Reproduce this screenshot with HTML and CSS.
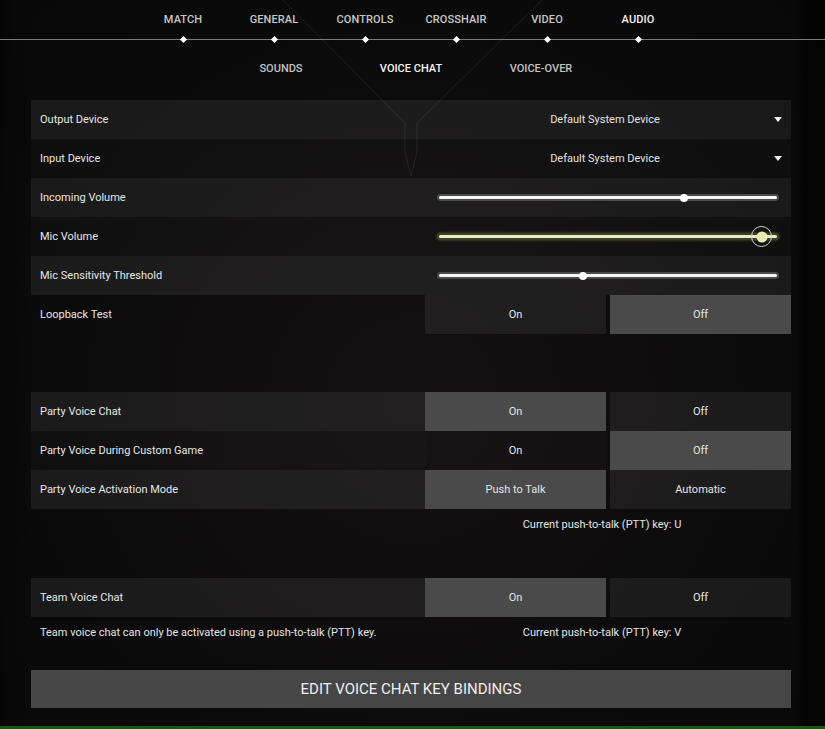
FILE: index.html
```html
<!DOCTYPE html>
<html>
<head>
<meta charset="utf-8">
<link rel="stylesheet" href="styles.css">
</head>
<body>
<div class="screen">
  <svg class="decor" width="825" height="200" viewBox="0 0 825 200">
    <path d="M283 0 L405 123 M542 0 L417 123 M405 123 L405 152 L411 176 L417 152 L417 123" fill="none" stroke="rgba(255,255,255,0.08)" stroke-width="1"/>
  </svg>
  <nav class="tabs">
    <div class="tab">MATCH</div>
    <div class="tab">GENERAL</div>
    <div class="tab">CONTROLS</div>
    <div class="tab">CROSSHAIR</div>
    <div class="tab">VIDEO</div>
    <div class="tab active">AUDIO</div>
  </nav>
  <nav class="subtabs">
    <div class="subtab">SOUNDS</div>
    <div class="subtab active">VOICE CHAT</div>
    <div class="subtab">VOICE-OVER</div>
  </nav>
  <main class="panel">
    <section class="group">
      <div class="row light">
        <div class="label">Output Device</div>
        <div class="value select"><span class="sel-text">Default System Device</span><i class="caret"></i></div>
      </div>
      <div class="row dark">
        <div class="label">Input Device</div>
        <div class="value select"><span class="sel-text">Default System Device</span><i class="caret"></i></div>
      </div>
      <div class="row light">
        <div class="label">Incoming Volume</div>
        <div class="value slider"><div class="track"><span class="thumb" style="left:72.2%"></span></div></div>
      </div>
      <div class="row dark">
        <div class="label">Mic Volume</div>
        <div class="value slider"><div class="track mic"><span class="thumb mic" style="left:95%"></span></div></div>
      </div>
      <div class="row light">
        <div class="label">Mic Sensitivity Threshold</div>
        <div class="value slider"><div class="track"><span class="thumb" style="left:42.7%"></span></div></div>
      </div>
      <div class="row clear">
        <div class="label">Loopback Test</div>
        <div class="value opts"><div class="opt">On</div><div class="opt sel">Off</div></div>
      </div>
    </section>

    <section class="group party">
      <div class="row light">
        <div class="label">Party Voice Chat</div>
        <div class="value opts"><div class="opt sel">On</div><div class="opt">Off</div></div>
      </div>
      <div class="row dark">
        <div class="label">Party Voice During Custom Game</div>
        <div class="value opts"><div class="opt">On</div><div class="opt sel">Off</div></div>
      </div>
      <div class="row light">
        <div class="label">Party Voice Activation Mode</div>
        <div class="value opts"><div class="opt sel">Push to Talk</div><div class="opt">Automatic</div></div>
      </div>
      <div class="note">
        <div class="label"></div>
        <div class="value">Current push-to-talk (PTT) key: U</div>
      </div>
    </section>

    <section class="group team">
      <div class="row light">
        <div class="label">Team Voice Chat</div>
        <div class="value opts"><div class="opt sel">On</div><div class="opt">Off</div></div>
      </div>
      <div class="note">
        <div class="label">Team voice chat can only be activated using a push-to-talk (PTT) key.</div>
        <div class="value">Current push-to-talk (PTT) key: V</div>
      </div>
    </section>

    <button class="edit">EDIT VOICE CHAT KEY BINDINGS</button>
  </main>
  <div class="spacer"></div>
  <div class="strip"></div>
</div>
</body>
</html>
```
FILE: styles.css
```css
* { box-sizing: border-box; }
html, body { margin: 0; padding: 0; }
body {
  width: 825px;
  height: 729px;
  overflow: hidden;
  background: #0b0a0a;
  font-family: Roboto, "Liberation Sans", sans-serif;
  color: #e4e4e4;
}
.screen {
  position: relative;
  width: 825px;
  height: 729px;
  display: flex;
  flex-direction: column;
  background:
    linear-gradient(90deg, rgba(0,0,0,0.35) 0, rgba(0,0,0,0) 30px, rgba(0,0,0,0) 795px, rgba(0,0,0,0.6) 805px),
    radial-gradient(ellipse at 50% 55%, #141112 0%, #0c0b0b 60%, #080808 100%);
}
.decor {
  position: absolute;
  top: 0;
  left: 0;
  pointer-events: none;
}
.tabs {
  position: relative;
  display: flex;
  height: 40px;
  padding-left: 137.5px;
  border-bottom: 1px solid #7a7a7a;
}
.tab {
  position: relative;
  width: 91px;
  text-align: center;
  line-height: 39px;
  font-size: 11px;
  font-weight: 500;
  color: #c6c6c6;
  letter-spacing: 0.1px;
}
.tab.active { color: #f2f2f2; }
.tab::after {
  content: "";
  position: absolute;
  left: 50%;
  bottom: -3px;
  width: 5px;
  height: 5px;
  margin-left: -2.5px;
  background: #ffffff;
  transform: rotate(45deg);
}
.subtabs {
  position: relative;
  display: flex;
  height: 60px;
  padding-left: 216px;
}
.subtab {
  width: 130px;
  text-align: center;
  line-height: 58px;
  font-size: 11px;
  font-weight: 500;
  color: #c2c2c2;
}
.subtab.active { color: #f4f4f4; }
.panel {
  position: relative;
  margin-left: 31px;
  width: 760px;
}
.group.party { margin-top: 58px; }
.group.team { margin-top: 39px; }
.row, .note {
  display: grid;
  grid-template-columns: 394px 366px;
  font-size: 11px;
}
.row { height: 39px; }
.label {
  display: flex;
  align-items: center;
  padding-left: 9px;
  color: #e6e6e6;
}
.row.light .label, .row.light .select, .row.light .slider { background: rgba(255,255,255,0.065); }
.row.dark .label, .row.dark .select, .row.dark .slider { background: rgba(255,255,255,0.025); }
.value { display: flex; align-items: center; }
.select {
  padding-left: 11px;
  padding-right: 9px;
}
.sel-text {
  flex: 1;
  text-align: center;
  color: #e2e2e2;
}
.caret {
  width: 0;
  height: 0;
  border-left: 4px solid transparent;
  border-right: 4px solid transparent;
  border-top: 5px solid #f4f4f4;
}
.slider { padding: 0 12px; }
.track {
  position: relative;
  flex: 1;
  height: 7px;
  border-radius: 4px;
  background: #4a4a4a;
}
.track::before {
  content: "";
  position: absolute;
  left: 2px;
  right: 2px;
  top: 2px;
  height: 3px;
  border-radius: 2px;
  background: #f6f6f6;
}
.track.mic { background: #3c3f30; box-shadow: 0 0 3px rgba(220, 240, 150, 0.35); }
.track.mic::before { background: #e9f1b8; }
.thumb {
  position: absolute;
  top: 50%;
  width: 8px;
  height: 8px;
  border-radius: 50%;
  background: #ffffff;
  transform: translate(-50%, -50%);
}
.thumb.mic {
  width: 11px;
  height: 11px;
  background: #e4ecb2;
}
.thumb.mic::after {
  content: "";
  position: absolute;
  left: 50%;
  top: 50%;
  width: 19px;
  height: 19px;
  border: 1.5px solid #cfcfcf;
  border-radius: 50%;
  transform: translate(-50%, -50%);
}
.value.opts {
  display: grid;
  grid-template-columns: 1fr 1fr;
  align-items: stretch;
  gap: 4px;
}
.opt {
  display: flex;
  align-items: center;
  justify-content: center;
  background: rgba(255,255,255,0.065);
  color: #e4e4e4;
}
.row.dark .opt { background: rgba(255,255,255,0.015); }
.row .opt.sel { background: #4a4a4a; }
.note { height: 30px; }
.note .value {
  justify-content: center;
  padding-right: 12px;
  color: #e4e4e4;
}
.note .label { color: #e4e4e4; }
.edit {
  display: block;
  width: 760px;
  height: 38px;
  margin-top: 23px;
  border: none;
  background: #464646;
  color: #eeeeee;
  font-family: Roboto, "Liberation Sans", sans-serif;
  font-size: 15px;
  padding: 0;
}
.spacer { flex: 1; }
.strip { height: 3px; background: #0d5d0d; }
```
